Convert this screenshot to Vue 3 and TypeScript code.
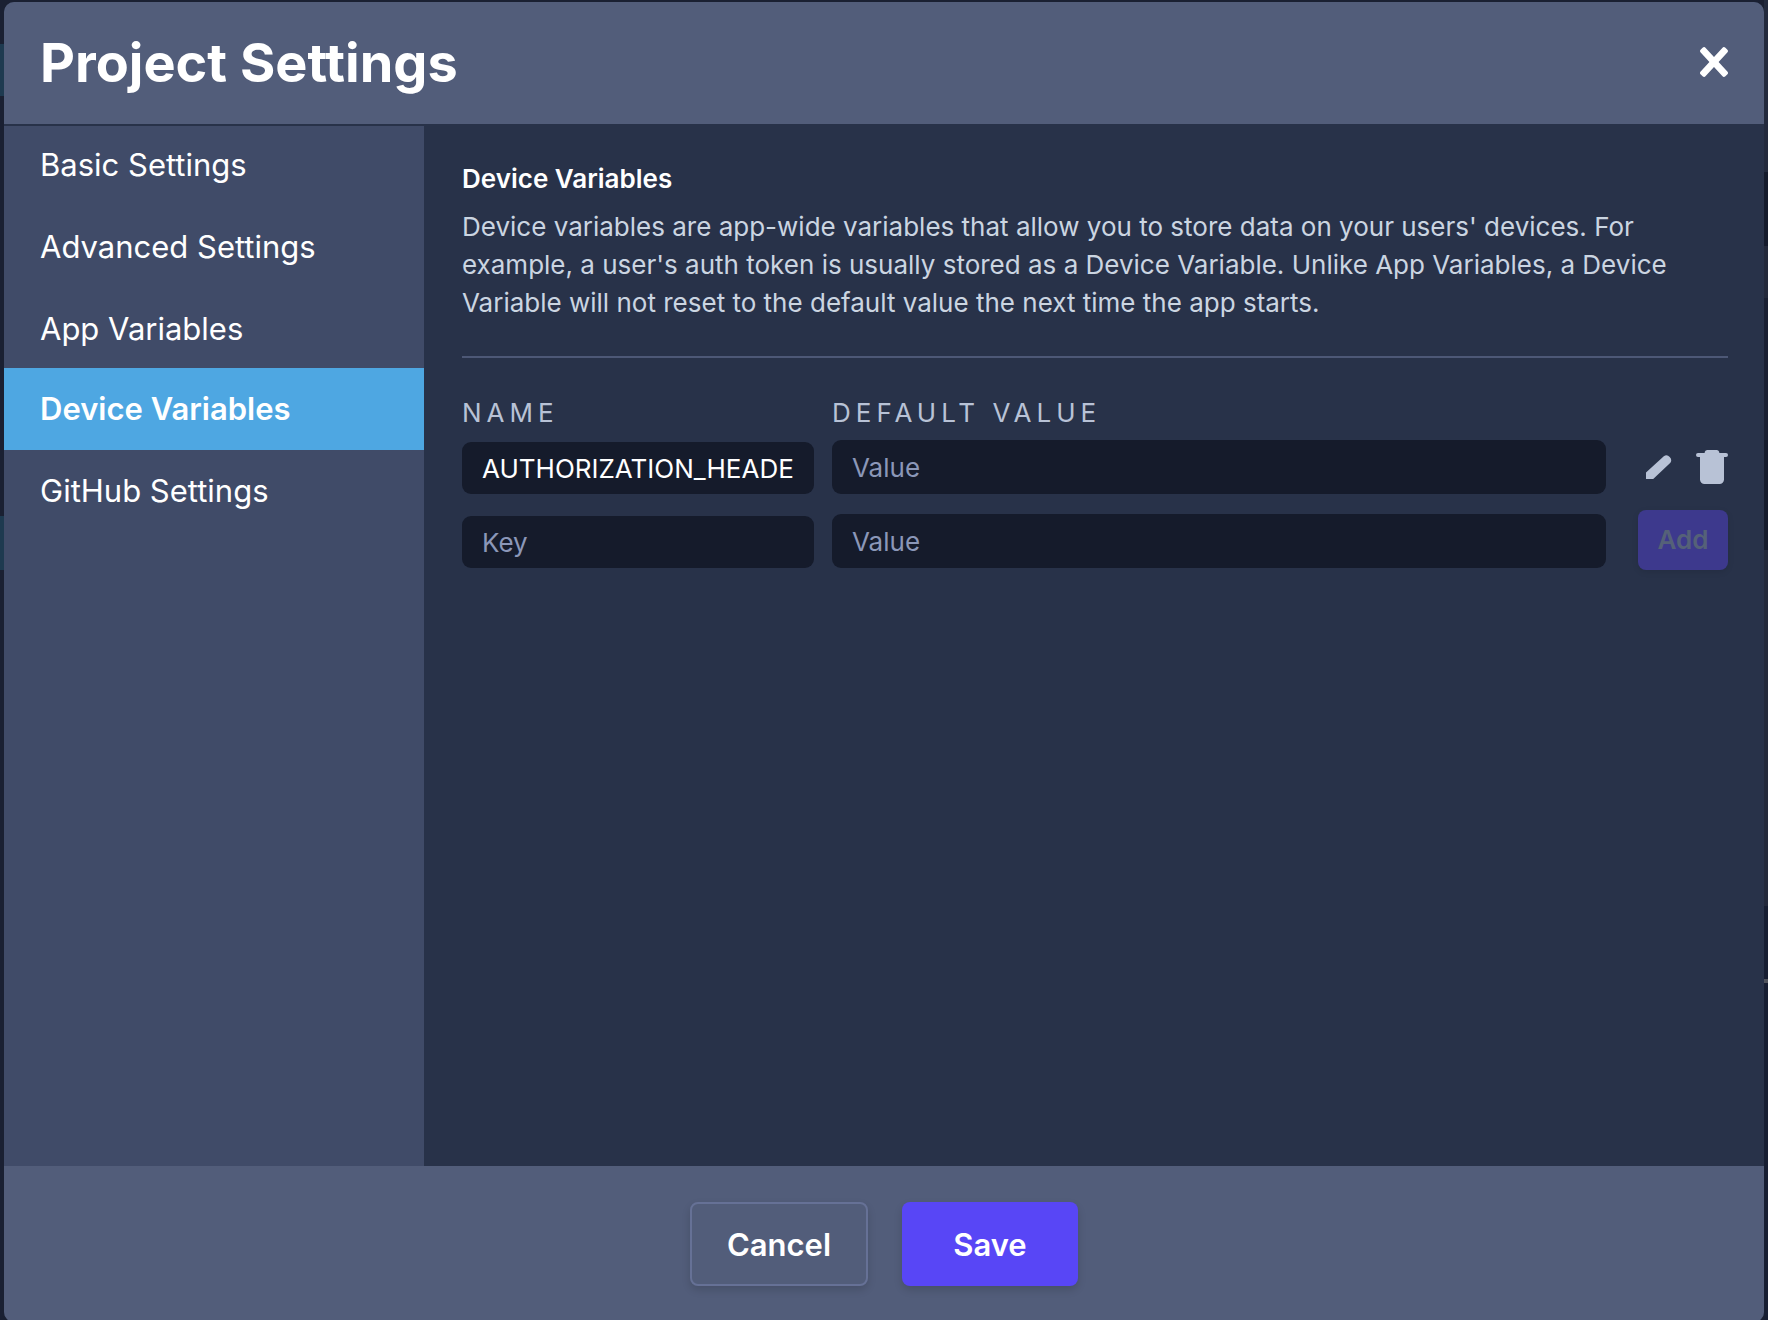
<script setup lang="ts">
import { ref } from 'vue'

interface DeviceVariable {
  name: string
  value: string
}

const sections = [
  'Basic Settings',
  'Advanced Settings',
  'App Variables',
  'Device Variables',
  'GitHub Settings',
]
const active = ref('Device Variables')
const variables = ref<DeviceVariable[]>([{ name: 'AUTHORIZATION_HEADER', value: '' }])
const draft = ref<DeviceVariable>({ name: '', value: '' })

function addVariable() {
  variables.value.push({ ...draft.value })
  draft.value = { name: '', value: '' }
}

function removeVariable(index: number) {
  variables.value.splice(index, 1)
}
</script>

<template>
  <div class="backdrop">
    <div class="modal" role="dialog" aria-labelledby="modal-title">
      <header class="header">
        <h1 id="modal-title">Project Settings</h1>
        <button type="button" class="icon-button" aria-label="Close">
          <svg width="28" height="32" viewBox="0 0 28 32" fill="currentColor">
            <rect x="-18.2" y="-3.4" width="36.4" height="6.8" rx="2.2" transform="translate(14 15) rotate(47.5)" />
            <rect x="-18.2" y="-3.4" width="36.4" height="6.8" rx="2.2" transform="translate(14 15) rotate(-47.5)" />
          </svg>
        </button>
      </header>

      <div class="body">
        <nav class="sidebar">
          <a
            v-for="section in sections"
            :key="section"
            href="#"
            class="item"
            :class="{ active: section === active }"
            @click.prevent="active = section"
          >{{ section }}</a>
        </nav>

        <main class="content">
          <h2>Device Variables</h2>
          <p class="description">
            Device variables are app-wide variables that allow you to store data on your users' devices. For example, a user's auth token is usually stored as a Device Variable. Unlike App Variables, a Device Variable will not reset to the default value the next time the app starts.
          </p>
          <hr />

          <div class="row labels">
            <span id="name-label">Name</span>
            <span id="value-label">Default Value</span>
          </div>
          <div v-for="(variable, index) in variables" :key="index" class="row">
            <input v-model="variable.name" class="name" type="text" placeholder="Key" aria-labelledby="name-label" />
            <input v-model="variable.value" class="value" type="text" placeholder="Value" aria-labelledby="value-label" />
            <div class="actions">
              <button type="button" class="icon-button" aria-label="Edit">
                <svg width="26" height="26" viewBox="0 0 26 26">
                  <path d="M0 18.6 17.8 2.2A4.8 4.8 0 0 1 24.4 8.8L7.2 25H0Z" fill="currentColor" />
                </svg>
              </button>
              <button type="button" class="icon-button" aria-label="Delete" @click="removeVariable(index)">
                <svg width="32" height="34" viewBox="0 0 32 34">
                  <path d="M11.5 0h9c1.6 0 2.8 1.2 2.9 3h6.6a2 2 0 0 1 0 4H28v22.5a4.5 4.5 0 0 1-4.5 4.5h-15A4.5 4.5 0 0 1 4 29.5V7H2a2 2 0 0 1 0-4h6.6C8.7 1.2 9.900 0 11.5 0Z" fill="currentColor" />
                </svg>
              </button>
            </div>
          </div>
          <form class="row" @submit.prevent="addVariable">
            <input v-model="draft.name" class="name" type="text" placeholder="Key" aria-labelledby="name-label" />
            <input v-model="draft.value" class="value" type="text" placeholder="Value" aria-labelledby="value-label" />
            <button type="submit" class="add" :disabled="!draft.name">Add</button>
          </form>
        </main>
      </div>

      <footer class="footer">
        <button type="button" class="button cancel">Cancel</button>
        <button type="button" class="button save">Save</button>
      </footer>
    </div>
  </div>
</template>

<style>
body {
  margin: 0;
  background: #1a2032;
}
</style>

<style scoped>
.backdrop {
  box-sizing: border-box;
  height: 100vh;
  overflow: hidden;
  padding: 2px 4px 0;
  background:
    linear-gradient(#1e3a50, #1e3a50) 0 44px / 4px 52px no-repeat,
    linear-gradient(#1e3a50, #1e3a50) 0 516px / 4px 54px no-repeat,
    linear-gradient(#50535c, #50535c) 100% 979px / 4px 4px no-repeat,
    linear-gradient(#232a3d 0 172px, #151b2c 172px 246px, #23293b 246px 298px, #1a2032 298px 440px, #151b2c 440px 550px, #23293b 550px 906px, #171e32 906px) 100% 0 / 4px 100% no-repeat,
    #1a2032;
  font-family: Inter, "Liberation Sans", sans-serif;
  color: #fff;
}

.modal {
  display: flex;
  flex-direction: column;
  min-height: 100vh;
  border-radius: 10px;
  overflow: hidden;
  background: #283249;
}

.header {
  display: flex;
  align-items: center;
  justify-content: space-between;
  padding: 0 36px;
  background: #525d7a;
}

h1 {
  margin: 0;
  font-size: 54px;
  font-weight: 700;
  line-height: 122px;
}

.icon-button {
  display: flex;
  padding: 0;
  border: 0;
  background: none;
  color: inherit;
  cursor: pointer;
}

.body {
  flex: 1;
  display: flex;
}

.sidebar {
  flex: none;
  width: 420px;
  background: #404b68;
  box-shadow: inset 0 2px #283249;
}

.item {
  display: block;
  padding: 0 36px;
  font-size: 31px;
  line-height: 82px;
  color: #fff;
  text-decoration: none;
}

.item.active {
  margin-top: -2px;
  background: #4ea7e2;
  font-weight: 600;
}

.content {
  flex: 1;
  min-width: 0;
  padding: 36px 36px 36px 38px;
  font-size: 26px;
  line-height: 38px;
}

h2 {
  margin: 0 0 10px;
  font-size: 26px;
  font-weight: 600;
}

.description {
  margin: 0;
  color: #cbd5e1;
}

hr {
  height: 2px;
  margin: 34px 0 36px;
  border: 0;
  background: #4d5876;
}

.row {
  display: grid;
  grid-template-columns: 352px minmax(0, 1fr) 104px;
  column-gap: 18px;
  align-items: end;
  height: 60px;
  margin-bottom: 14px;
}

.labels {
  height: 38px;
  margin-bottom: 4px;
  color: #b8c2d6;
  letter-spacing: 5px;
  text-transform: uppercase;
}

input {
  box-sizing: border-box;
  width: 100%;
  min-width: 0;
  height: 54px;
  margin: 0 0 2px;
  padding: 0 20px;
  border: 0;
  border-radius: 9px;
  background: #151b2b;
  font: inherit;
  color: #fff;
}

input.name {
  height: 52px;
}

input::placeholder {
  color: #8b97b8;
  opacity: 1;
}

.actions {
  display: flex;
  align-items: center;
  justify-content: flex-end;
  gap: 24px;
  height: 58px;
  color: #b8c2d6;
}

.add {
  justify-self: end;
  width: 90px;
  height: 60px;
  padding: 0;
  border: 0;
  border-radius: 8px;
  background: #3d398d;
  box-shadow: 0 2px 6px rgba(0, 0, 0, 0.1);
  font: inherit;
  font-weight: 600;
  color: #556178;
}

.footer {
  display: flex;
  justify-content: center;
  gap: 34px;
  padding: 36px;
  background: #525d7a;
}

.button {
  box-sizing: border-box;
  height: 84px;
  padding: 0;
  border: 0;
  border-radius: 8px;
  box-shadow: 0 4px 8px rgba(0, 0, 0, 0.14);
  font: inherit;
  font-size: 31px;
  font-weight: 600;
  color: #fff;
}

.cancel {
  width: 178px;
  border: 2px solid #667196;
  background: #525d7a;
}

.save {
  width: 176px;
  background: #5846f6;
}
</style>
